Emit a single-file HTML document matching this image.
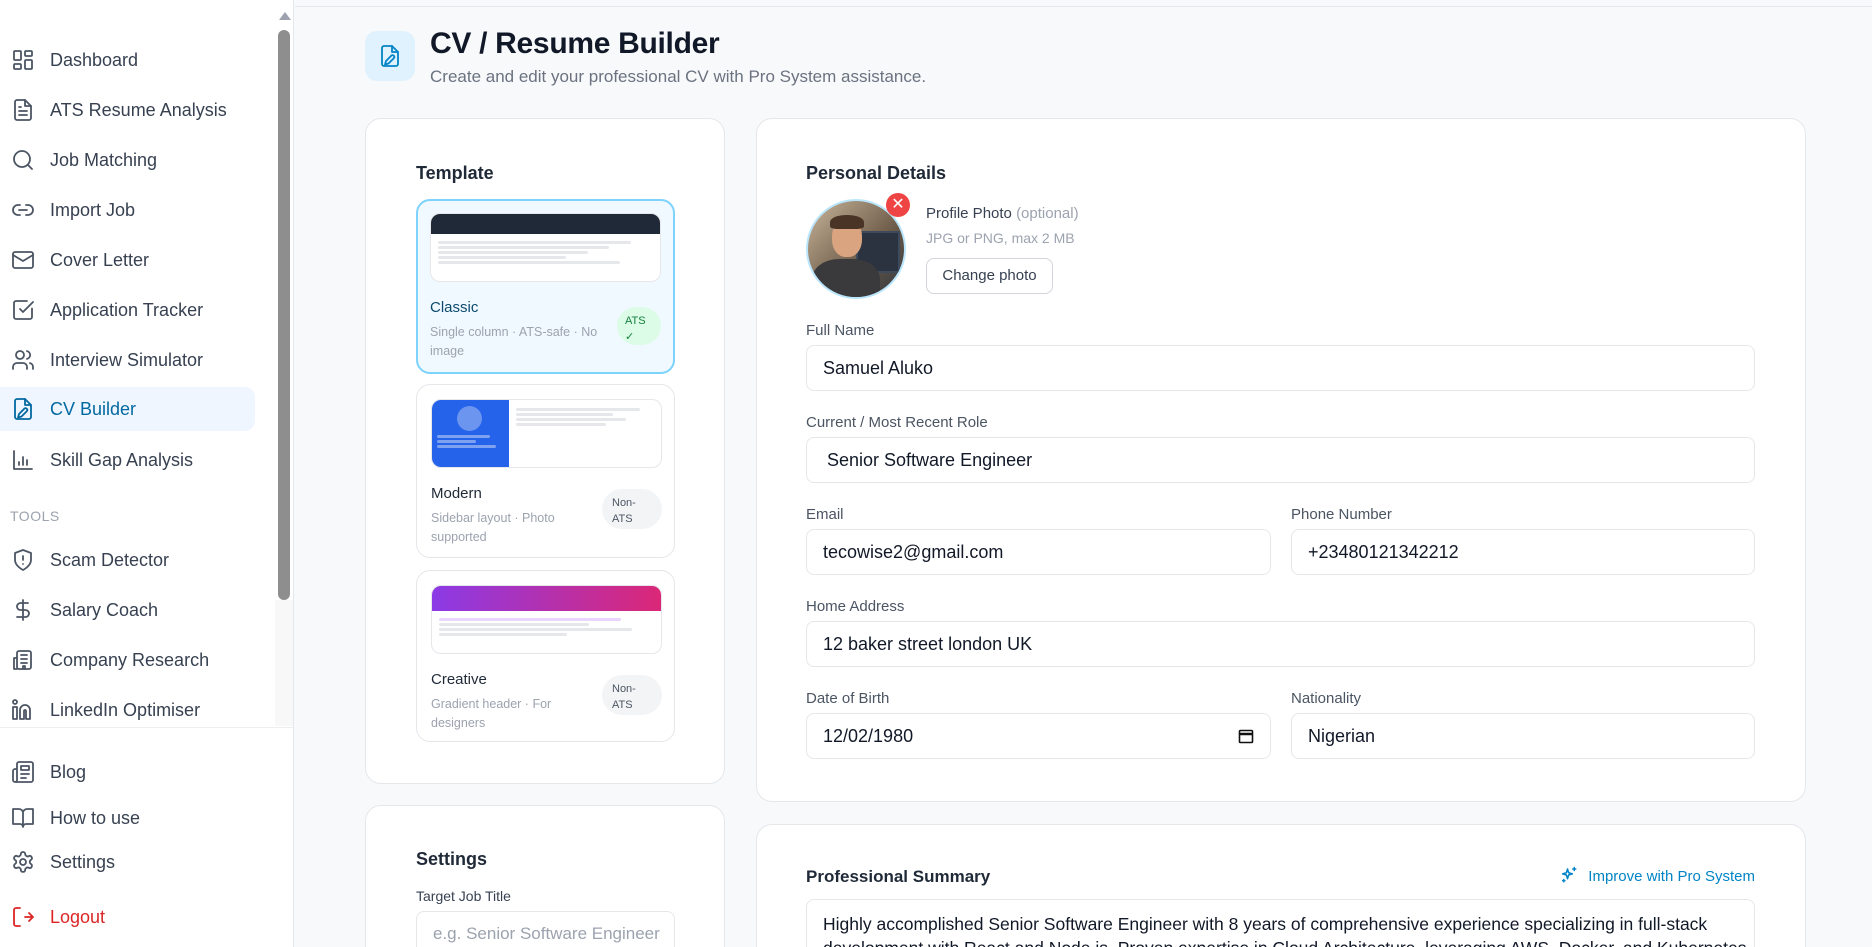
<!DOCTYPE html>
<html style="width:1872px;height:947px;overflow:hidden"><head><meta charset="utf-8"><style>
*{box-sizing:border-box;margin:0;padding:0}
body{width:1872px;height:947px;overflow:hidden;font-family:"Liberation Sans",sans-serif;background:#f8f9fb;position:relative;color:#1f2937}
#wrap{position:absolute;left:0;top:0;width:1872px;height:947px;overflow:hidden}
.sb{position:absolute;left:0;top:0;width:294px;height:947px;background:#fff;border-right:1px solid #e5e7eb}
.nav{position:absolute;left:0;width:255px;height:44px;display:flex;align-items:center;font-size:18px;color:#374151}
.nav svg{position:absolute;left:11px;width:24px;height:24px;fill:none;stroke:#4b5563;stroke-width:1.8;stroke-linecap:round;stroke-linejoin:round}
.nav span{position:absolute;left:50px}
.act{background:#eff6ff;border-radius:0 10px 10px 0;color:#0369a1}
.act svg{stroke:#0369a1}
.card{position:absolute;background:#fff;border:1px solid #e5e7eb;border-radius:16px}
.h{position:absolute;font-size:18px;font-weight:bold;color:#1f2937}
.lbl{position:absolute;font-size:15px;color:#4b5563}
.inp{position:absolute;height:46px;border:1px solid #e5e7eb;border-radius:8px;background:#fff;font-size:18px;color:#111827;padding-left:16px;display:flex;align-items:center}
.tpl{position:absolute;left:416px;width:259px;border:1px solid #e5e7eb;border-radius:14px;background:#fff}
.prev{position:absolute;left:14px;top:14px;width:231px;height:69px;border:1px solid #e5e7eb;border-radius:10px;overflow:hidden;background:#fff}
.ln{position:absolute;height:3px;background:#e5e7eb;border-radius:2px}
.tn{position:absolute;left:14px;top:100px;font-size:15px;color:#1f2937}
.td{position:absolute;left:14px;top:124px;font-size:12.5px;color:#9ca3af;line-height:19px;width:170px}
.bd{position:absolute;right:12px;top:104px;width:60px;height:40px;border-radius:20px;background:#f3f4f6;font-size:11px;color:#4b5563;padding:6px 0 0 10px;line-height:16px}
</style></head><body><div id="wrap">
<div class="sb">
 <div style="position:absolute;left:279px;top:12px;width:0;height:0;border-left:6px solid transparent;border-right:6px solid transparent;border-bottom:8px solid #9ca3af"></div>
 <div style="position:absolute;left:278px;top:30px;width:12px;height:570px;background:#8e8e8e;border-radius:6px"></div>
 <div style="position:absolute;left:279px;top:714px;width:0;height:0;border-left:6px solid transparent;border-right:6px solid transparent;border-top:8px solid #9ca3af"></div>
 <div style="position:absolute;left:275px;top:600px;width:18px;height:126px;background:#f8f8f8"></div>
 <div style="position:absolute;left:0;top:727px;width:294px;height:1px;background:#eceef1"></div>

 <div class="nav" style="top:38px"><svg viewBox="0 0 24 24"><rect x="3" y="3" width="7" height="9" rx="1"/><rect x="14" y="3" width="7" height="5" rx="1"/><rect x="14" y="12" width="7" height="9" rx="1"/><rect x="3" y="16" width="7" height="5" rx="1"/></svg><span>Dashboard</span></div>
 <div class="nav" style="top:88px"><svg viewBox="0 0 24 24"><path d="M14 2H6a2 2 0 0 0-2 2v16a2 2 0 0 0 2 2h12a2 2 0 0 0 2-2V8z"/><path d="M14 2v6h6M8 13h8M8 17h8M8 9h2"/></svg><span>ATS Resume Analysis</span></div>
 <div class="nav" style="top:138px"><svg viewBox="0 0 24 24"><circle cx="11" cy="11" r="8"/><path d="m21 21-4.3-4.3"/></svg><span>Job Matching</span></div>
 <div class="nav" style="top:188px"><svg viewBox="0 0 24 24"><path d="M9 17H7A5 5 0 0 1 7 7h2M15 7h2a5 5 0 1 1 0 10h-2M8 12h8"/></svg><span>Import Job</span></div>
 <div class="nav" style="top:238px"><svg viewBox="0 0 24 24"><rect x="2" y="4" width="20" height="16" rx="2"/><path d="m22 7-10 6L2 7"/></svg><span>Cover Letter</span></div>
 <div class="nav" style="top:288px"><svg viewBox="0 0 24 24"><path d="M21 10.5V19a2 2 0 0 1-2 2H5a2 2 0 0 1-2-2V5a2 2 0 0 1 2-2h11"/><path d="m9 11 3 3L22 4"/></svg><span>Application Tracker</span></div>
 <div class="nav" style="top:338px"><svg viewBox="0 0 24 24"><path d="M16 21v-2a4 4 0 0 0-4-4H6a4 4 0 0 0-4 4v2"/><circle cx="9" cy="7" r="4"/><path d="M22 21v-2a4 4 0 0 0-3-3.9M16 3.1a4 4 0 0 1 0 7.8"/></svg><span>Interview Simulator</span></div>
 <div class="nav act" style="top:387px"><svg viewBox="0 0 24 24"><path d="M14 2H6a2 2 0 0 0-2 2v16a2 2 0 0 0 2 2h12a2 2 0 0 0 2-2V8z"/><path d="M14 2v6h6"/><path d="M13.5 11.5a1.8 1.8 0 0 1 2.5 2.5L10.5 19.5 7 20.5l1-3.5z"/></svg><span>CV Builder</span></div>
 <div class="nav" style="top:438px"><svg viewBox="0 0 24 24"><path d="M3 3v18h18M8 17v-3M12 17V9M16 17v-5"/></svg><span>Skill Gap Analysis</span></div>
 <div style="position:absolute;left:10px;top:508px;font-size:14px;color:#9ca3af;letter-spacing:.5px">TOOLS</div>
 <div class="nav" style="top:538px"><svg viewBox="0 0 24 24"><path d="M12 22s8-4 8-10V5l-8-3-8 3v7c0 6 8 10 8 10z"/><path d="M12 8v4M12 16h.01"/></svg><span>Scam Detector</span></div>
 <div class="nav" style="top:588px"><svg viewBox="0 0 24 24"><path d="M12 2v20M17 5H9.5a3.5 3.5 0 0 0 0 7h5a3.5 3.5 0 0 1 0 7H6"/></svg><span>Salary Coach</span></div>
 <div class="nav" style="top:638px"><svg viewBox="0 0 24 24"><rect x="6" y="3" width="14" height="18" rx="2"/><path d="M6 10H3v11h3M10 7h6M10 11h6M10 15h6M12 21v-3h2v3"/></svg><span>Company Research</span></div>
 <div class="nav" style="top:688px"><svg viewBox="0 0 24 24"><circle cx="4" cy="4" r="2"/><path d="M2 9h4v12H2zM9 21V12a5 5 0 0 1 10 0v9h-4v-8a1 1 0 0 0-2 0v8z"/></svg><span>LinkedIn Optimiser</span></div>
 <div class="nav" style="top:750px"><svg viewBox="0 0 24 24"><path d="M4 22h16a2 2 0 0 0 2-2V4a2 2 0 0 0-2-2H8a2 2 0 0 0-2 2v16a2 2 0 0 1-4 0v-9c0-1 1-2 2-2h2M18 14h-8M15 18h-5"/><rect x="10" y="6" width="8" height="4"/></svg><span>Blog</span></div>
 <div class="nav" style="top:796px"><svg viewBox="0 0 24 24"><path d="M2 3h6a4 4 0 0 1 4 4v14a3 3 0 0 0-3-3H2zM22 3h-6a4 4 0 0 0-4 4v14a3 3 0 0 1 3-3h7z"/></svg><span>How to use</span></div>
 <div class="nav" style="top:840px"><svg viewBox="0 0 24 24"><circle cx="12" cy="12" r="3"/><path d="M12.2 2h-.4a2 2 0 0 0-2 2v.2a2 2 0 0 1-1 1.7l-.4.3a2 2 0 0 1-2 0l-.2-.1a2 2 0 0 0-2.7.7l-.2.4a2 2 0 0 0 .7 2.7l.2.1a2 2 0 0 1 1 1.7v.5a2 2 0 0 1-1 1.7l-.2.1a2 2 0 0 0-.7 2.7l.2.4a2 2 0 0 0 2.7.7l.2-.1a2 2 0 0 1 2 0l.4.3a2 2 0 0 1 1 1.7v.2a2 2 0 0 0 2 2h.4a2 2 0 0 0 2-2v-.2a2 2 0 0 1 1-1.7l.4-.3a2 2 0 0 1 2 0l.2.1a2 2 0 0 0 2.7-.7l.2-.4a2 2 0 0 0-.7-2.7l-.2-.1a2 2 0 0 1-1-1.7v-.5a2 2 0 0 1 1-1.7l.2-.1a2 2 0 0 0 .7-2.7l-.2-.4a2 2 0 0 0-2.7-.7l-.2.1a2 2 0 0 1-2 0l-.4-.3a2 2 0 0 1-1-1.7V4a2 2 0 0 0-2-2z"/></svg><span>Settings</span></div>
 <div class="nav" style="top:895px;color:#dc2626"><svg viewBox="0 0 24 24" style="stroke:#dc2626"><path d="M9 21H5a2 2 0 0 1-2-2V5a2 2 0 0 1 2-2h4M14 12h8M18 8l4 4-4 4"/></svg><span>Logout</span></div>
</div>

<div style="position:absolute;left:295px;top:6px;right:0;height:1px;background:#e5e7eb"></div>
<div style="position:absolute;left:365px;top:31px;width:50px;height:50px;border-radius:12px;background:#e0f2fe"></div>
<svg style="position:absolute;left:378px;top:44px" width="24" height="24" viewBox="0 0 24 24" fill="none" stroke="#0284c7" stroke-width="1.8" stroke-linecap="round" stroke-linejoin="round"><path d="M14 2H6a2 2 0 0 0-2 2v16a2 2 0 0 0 2 2h12a2 2 0 0 0 2-2V8z"/><path d="M14 2v6h6"/><path d="M13.5 11.5a1.8 1.8 0 0 1 2.5 2.5L10.5 19.5 7 20.5l1-3.5z"/></svg>
<div style="position:absolute;left:430px;top:27px;font-size:30px;font-weight:bold;color:#111827;letter-spacing:-0.3px">CV / Resume Builder</div>
<div style="position:absolute;left:430px;top:67px;font-size:17px;color:#6b7280">Create and edit your professional CV with Pro System assistance.</div>

<div class="card" style="left:365px;top:118px;width:360px;height:666px"></div>
<div class="h" style="left:416px;top:163px">Template</div>
<div class="tpl" style="top:199px;height:175px;background:#f0f9ff;border:2px solid #7dd3fc">
 <div class="prev" style="left:12px;top:12px"><div style="height:20px;background:#1f2937"></div>
 <div class="ln" style="left:7px;top:27px;width:193px"></div><div class="ln" style="left:7px;top:32px;width:171px"></div><div class="ln" style="left:7px;top:37px;width:150px"></div><div class="ln" style="left:7px;top:42px;width:128px"></div><div class="ln" style="left:7px;top:47px;width:182px"></div></div>
 <div class="tn" style="left:12px;top:98px;color:#0c4a6e">Classic</div>
 <div class="td" style="left:12px;top:122px">Single column · ATS-safe · No image</div>
 <div class="bd" style="background:#dcfce7;color:#15803d;width:44px;height:38px;padding-left:8px;top:106px">ATS<br>✓</div>
</div>
<div class="tpl" style="top:384px;height:174px">
 <div class="prev"><div style="position:absolute;left:0;top:0;width:77px;height:69px;background:#2563eb"></div><div style="position:absolute;left:25px;top:6px;width:25px;height:25px;border-radius:50%;background:#6b95ef"></div>
 <div class="ln" style="left:5px;top:35px;width:53px;background:#7ea2f0"></div><div class="ln" style="left:5px;top:40px;width:39px;background:#7ea2f0"></div><div class="ln" style="left:5px;top:45px;width:59px;background:#7ea2f0"></div>
 <div class="ln" style="left:84px;top:8px;width:124px"></div><div class="ln" style="left:84px;top:13px;width:97px"></div><div class="ln" style="left:84px;top:18px;width:110px"></div><div class="ln" style="left:84px;top:23px;width:90px"></div></div>
 <div class="tn">Modern</div><div class="td">Sidebar layout · Photo supported</div><div class="bd">Non-<br>ATS</div>
</div>
<div class="tpl" style="top:570px;height:172px">
 <div class="prev"><div style="height:25px;background:linear-gradient(90deg,#8b3ae6,#db2777)"></div>
 <div class="ln" style="left:7px;top:32px;width:182px;background:#e9d5ff"></div><div class="ln" style="left:7px;top:37px;width:150px"></div><div class="ln" style="left:7px;top:42px;width:193px"></div><div class="ln" style="left:7px;top:47px;width:128px"></div></div>
 <div class="tn">Creative</div><div class="td">Gradient header · For designers</div><div class="bd">Non-<br>ATS</div>
</div>

<div class="card" style="left:365px;top:805px;width:360px;height:200px"></div>
<div class="h" style="left:416px;top:849px">Settings</div>
<div class="lbl" style="left:416px;top:888px;font-size:14px;color:#374151">Target Job Title</div>
<div class="inp" style="left:416px;top:911px;width:259px;color:#9ca3af;font-size:17px">e.g. Senior Software Engineer</div>

<div class="card" style="left:756px;top:118px;width:1050px;height:684px"></div>
<div class="h" style="left:806px;top:163px">Personal Details</div>
<div style="position:absolute;left:806px;top:199px;width:100px;height:100px;border-radius:50%;border:2px solid #bae6fd;overflow:hidden;background:linear-gradient(135deg,#c9b59a,#6b5a48 60%,#2f3640)">
 <div style="position:absolute;left:48px;top:30px;width:44px;height:42px;background:#2b3340;border:2px solid #3d4a5c"></div>
 <div style="position:absolute;left:24px;top:18px;width:30px;height:38px;border-radius:45%;background:#d9a47f"></div>
 <div style="position:absolute;left:22px;top:14px;width:34px;height:14px;border-radius:50% 50% 20% 20%;background:#4a3426"></div>
 <div style="position:absolute;left:4px;top:58px;width:68px;height:50px;border-radius:40% 40% 0 0;background:#3a3a3c"></div>
</div>
<div style="position:absolute;left:886px;top:193px;width:24px;height:24px;border-radius:50%;background:#ef4444;color:#fff;font-size:16px;text-align:center;line-height:24px">✕</div>
<div style="position:absolute;left:926px;top:205px;font-size:15px;color:#374151">Profile Photo <span style="color:#9ca3af">(optional)</span></div>
<div style="position:absolute;left:926px;top:230px;font-size:14px;color:#9ca3af">JPG or PNG, max 2 MB</div>
<div style="position:absolute;left:926px;top:258px;width:127px;height:36px;border:1px solid #d1d5db;border-radius:8px;font-size:15px;color:#374151;text-align:center;line-height:34px">Change photo</div>

<div class="lbl" style="left:806px;top:322px">Full Name</div>
<div class="inp" style="left:806px;top:345px;width:949px">Samuel Aluko</div>
<div class="lbl" style="left:806px;top:414px">Current / Most Recent Role</div>
<div class="inp" style="left:806px;top:437px;width:949px;padding-left:20px">Senior Software Engineer</div>
<div class="lbl" style="left:806px;top:506px">Email</div>
<div class="inp" style="left:806px;top:529px;width:465px">tecowise2@gmail.com</div>
<div class="lbl" style="left:1291px;top:506px">Phone Number</div>
<div class="inp" style="left:1291px;top:529px;width:464px">+23480121342212</div>
<div class="lbl" style="left:806px;top:598px">Home Address</div>
<div class="inp" style="left:806px;top:621px;width:949px">12 baker street london UK</div>
<div class="lbl" style="left:806px;top:690px">Date of Birth</div>
<div class="inp" style="left:806px;top:713px;width:465px">12/02/1980
 <svg style="position:absolute;right:16px;top:14px" width="16" height="16" viewBox="0 0 16 16" fill="none" stroke="#111" stroke-width="1.6"><rect x="1.5" y="2.5" width="13" height="12" rx="1"/><path d="M1.5 6h13" stroke-width="2.5"/></svg></div>
<div class="lbl" style="left:1291px;top:690px">Nationality</div>
<div class="inp" style="left:1291px;top:713px;width:464px">Nigerian</div>

<div class="card" style="left:756px;top:824px;width:1050px;height:200px"></div>
<div class="h" style="left:806px;top:867px;font-size:17px">Professional Summary</div>
<div style="position:absolute;right:117px;top:868px;font-size:15px;color:#0284c7">Improve with Pro System</div>
<svg style="position:absolute;left:1560px;top:866px" width="18" height="18" viewBox="0 0 24 24" fill="none" stroke="#0284c7" stroke-width="2" stroke-linecap="round" stroke-linejoin="round"><path d="M10 4l1.5 5 5 1.5-5 1.5L10 17l-1.5-5-5-1.5 5-1.5z"/><path d="M19 2v4M17 4h4M5 18v3M3.5 19.5h3"/></svg>
<div class="inp" style="left:806px;top:899px;width:949px;height:80px;padding-top:12px;line-height:24px;font-size:17.5px;display:block">Highly accomplished Senior Software Engineer with 8 years of comprehensive experience specializing in full-stack development with React and Node.js. Proven expertise in Cloud Architecture, leveraging AWS, Docker, and Kubernetes</div>
</div></body></html>
